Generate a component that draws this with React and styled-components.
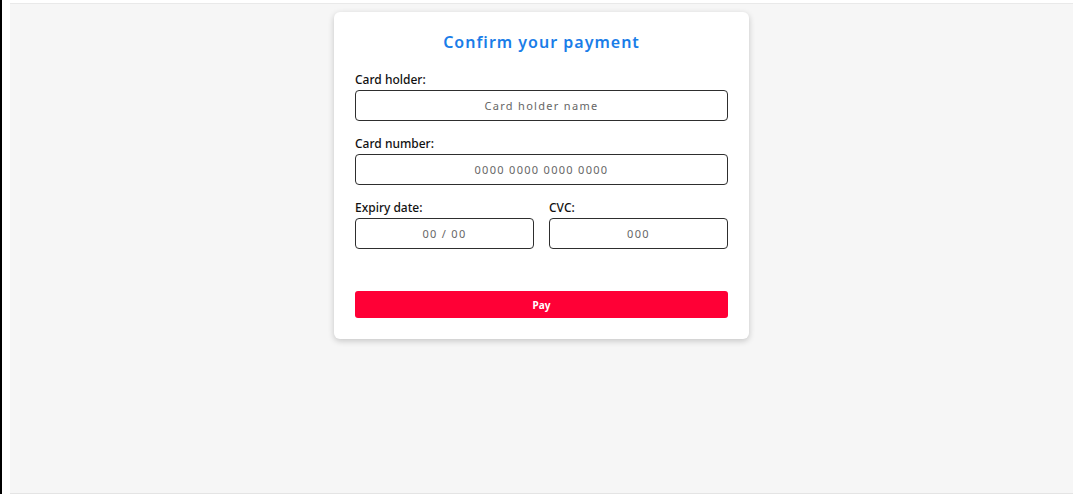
import React from 'react';

// styled-components
import styled, { createGlobalStyle } from 'styled-components';

const GlobalStyle = createGlobalStyle`
  html, body {
    margin: 0;
    padding: 0;
    background: #fff;
  }

  body {
    font-family: "Noto Sans", "Open Sans", sans-serif;
  }
`;

// 결제 확인 페이지
const App = () => {
  return (
    <>
      <GlobalStyle />
      <Frame>
        <Edge />
        <Stage>
          <Card>
            <Title>Confirm your payment</Title>

            <Field>
              <Label>Card holder:</Label>
              <Input placeholder="Card holder name" />
            </Field>

            <Field>
              <Label>Card number:</Label>
              <Input placeholder="0000 0000 0000 0000" />
            </Field>

            <Row>
              <Field>
                <Label>Expiry date:</Label>
                <Input placeholder="00 / 00" />
              </Field>
              <Field>
                <Label>CVC:</Label>
                <Input placeholder="000" />
              </Field>
            </Row>

            <PayButton type="button">Pay</PayButton>
          </Card>
        </Stage>
      </Frame>
    </>
  );
};

export default App;

// 전체 화면
const Frame = styled.div`
  display: flex;
  width: 1081px;
  height: 494px;
  overflow: hidden;
`;

// 왼쪽 검은 선
const Edge = styled.div`
  width: 2px;
  background: #000;
  flex-shrink: 0;
`;

// 회색 배경 영역
const Stage = styled.main`
  display: flex;
  justify-content: center;
  align-items: flex-start;

  width: 1063px;
  height: 491px;
  margin: 3px 0 0 8px;
  padding-top: 8px;
  box-sizing: border-box;

  background: #f6f6f6;
  border-top: 1px solid #e9e9e9;
  border-bottom: 1px solid #e4e4e4;
`;

// 카드
const Card = styled.section`
  display: flex;
  flex-direction: column;

  width: 415px;
  box-sizing: border-box;
  padding: 20px 21px 21px;

  background: #fff;
  border-radius: 6px;
  box-shadow: 0 2px 6px rgba(0, 0, 0, 0.2);
`;

const Title = styled.h1`
  margin: 0 0 20px;
  text-align: center;

  font-size: 16px;
  font-weight: 600;
  letter-spacing: 1px;
  color: #1a7de8;
  line-height: 20px;
`;

const Field = styled.div`
  display: flex;
  flex-direction: column;
  flex: 1;
  min-width: 0;
  margin-bottom: 15px;
`;

const Label = styled.label`
  font-size: 12px;
  font-weight: 500;
  color: #111;
  line-height: 15px;
  margin-bottom: 3px;
`;

const Input = styled.input`
  width: 100%;
  height: 31px;
  box-sizing: border-box;
  padding: 0 10px;

  border: 1.6px solid #2e2e2e;
  border-radius: 4px;
  background: #fff;

  font-family: "Noto Sans", sans-serif;
  font-size: 11px;
  letter-spacing: 1.3px;
  text-align: center;
  outline: none;

  &::placeholder {
    color: #666;
  }
`;

const Row = styled.div`
  display: flex;
  gap: 15px;
`;

const PayButton = styled.button`
  height: 27px;
  margin-top: 27px;

  border: none;
  border-radius: 3px;
  background: #ff0036;
  color: #fff;

  font-family: "Noto Sans", sans-serif;
  font-size: 10px;
  font-weight: 700;
  cursor: pointer;
`;
